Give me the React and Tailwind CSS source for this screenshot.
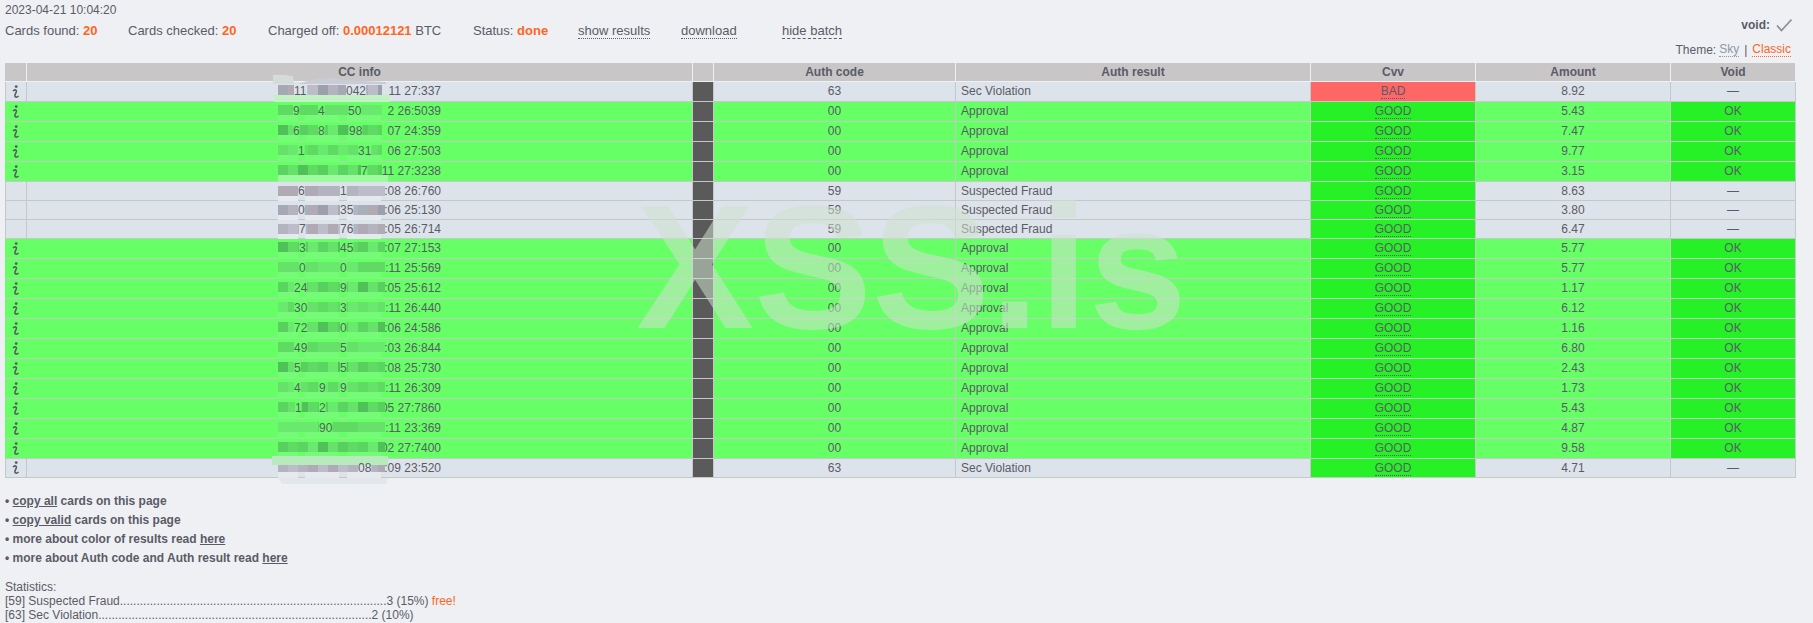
import React from "react";

const A = { code: "00", result: "Approval", cvv: "GOOD", ok: true };
const rows = [
  { tail: "11 27:337", code: "63", result: "Sec Violation", cvv: "BAD", amount: "8.92", ok: false, frags: [["11", 294], ["042", 346]] },
  { ...A, tail: "2 26:5039", amount: "5.43", frags: [["9", 293], ["4", 318], ["50", 348]] },
  { ...A, tail: "07 24:359", amount: "7.47", frags: [["6", 293], ["8", 318], ["98", 349]] },
  { ...A, tail: "06 27:503", amount: "9.77", frags: [["1", 298], ["31", 358]] },
  { ...A, tail: "11 27:3238", amount: "3.15", frags: [["7", 361]] },
  { tail: "4:08 26:760", code: "59", result: "Suspected Fraud", cvv: "GOOD", amount: "8.63", ok: false, frags: [["6", 298], ["1", 340]] },
  { tail: "4:06 25:130", code: "59", result: "Suspected Fraud", cvv: "GOOD", amount: "3.80", ok: false, frags: [["0", 298], ["35", 340]] },
  { tail: "6:05 26:714", code: "59", result: "Suspected Fraud", cvv: "GOOD", amount: "6.47", ok: false, frags: [["7", 299], ["76", 340]] },
  { ...A, tail: "4:07 27:153", amount: "5.77", frags: [["3", 299], ["45", 340]] },
  { ...A, tail: "5:11 25:569", amount: "5.77", frags: [["0", 299], ["0", 340]] },
  { ...A, tail: "2:05 25:612", amount: "1.17", frags: [["24", 294], ["9", 340]] },
  { ...A, tail: "6:11 26:440", amount: "6.12", frags: [["30", 294], ["3", 340]] },
  { ...A, tail: "3:06 24:586", amount: "1.16", frags: [["72", 294], ["0", 340]] },
  { ...A, tail: "4:03 26:844", amount: "6.80", frags: [["49", 294], ["5", 340]] },
  { ...A, tail: "0:08 25:730", amount: "2.43", frags: [["5", 294], ["5", 340]] },
  { ...A, tail: "6:11 26:309", amount: "1.73", frags: [["4", 294], ["9", 319], ["9", 340]] },
  { ...A, tail: "05 27:7860", amount: "5.43", frags: [["1", 295], ["2", 319]] },
  { ...A, tail: ":11 23:369", amount: "4.87", frags: [["90", 319]] },
  { ...A, tail: "02 27:7400", amount: "9.58", frags: [] },
  { tail: ":09 23:520", code: "63", result: "Sec Violation", cvv: "GOOD", amount: "4.71", ok: false, frags: [["08", 358]] },
];

let top = 82;
const tops = rows.map((r, i) => {
  const t = top;
  const short = !r.ok && i !== 0 && i !== 19;
  r.short = short;
  top += short || i === 19 ? 19 : 20;
  return t;
});

const greens = ["#58cf5e", "#5fdb64", "#4fc158", "#66e26b", "#5bd561", "#6ae96f"];
const greys = ["#a6a8b6", "#b3b4c0", "#9ca0ad", "#bcbdc8", "#aab0ba", "#b0aab4"];
const cols = Array.from({ length: 11 }, (_, i) => 278 + i * 10);
const OX = 268;
const OY = 70;

function Mask() {
  const shapes = [];
  rows.forEach((r, i) => {
    const t = tops[i] - OY;
    const grey = !r.ok;
    const dy = r.short ? 4 : 3;
    // smudged strips between the mosaic bands
    [[278, 20], [305, 34], [347, 34]].forEach(([x, w], k) => {
      shapes.push(
        <rect key={`s${i}-${k}`} x={x - OX} y={t + 13} width={w} height={r.short ? 6 : 7} fill={grey ? "#e6eaef" : "#76fb79"} />
      );
    });
    // mosaic band
    cols.forEach((x, c) => {
      const idx = (i * 7 + c * 5 + ((i * c) % 4)) % 6;
      const w = c === 10 ? (i < 5 ? 4 : 7) : 10;
      shapes.push(
        <rect key={`m${i}-${c}`} x={x - OX} y={t + dy} width={w} height={10} fill={(grey ? greys : greens)[idx]} />
      );
    });
    // narrow gaps where a few digits show through
    r.frags.forEach(([s, x], k) => {
      shapes.push(
        <rect key={`g${i}-${k}`} x={x - OX} y={t + dy} width={s.length * 6.7} height={10} fill={grey ? "#dde3ea" : "#66ff66"} />
      );
    });
  });
  return (
    <svg
      className="absolute left-[268px] top-[70px] pointer-events-none"
      width="128"
      height="418"
      viewBox="0 0 128 418"
    >
      {shapes}
      <path d="M5 5 Q12 4 25 6 L26 14 L5 14Z" fill="#d4dbd9" />
      <path d="M30 14 Q60 4 75 10 L118 12 L118 14Z" fill="#c9ccd4" />
      <rect x="6" y="25" width="116" height="7" fill="#c2f2c4" />
      <rect x="10" y="105" width="110" height="7" fill="#9dfa9f" />
      <rect x="4" y="386" width="116" height="9" fill="#b9eabd" />
      <path d="M10 408 H120 L118 414 H14Z" fill="#e2e7ec" />
      {rows.map((r, i) =>
        r.frags.map(([s, x], k) => (
          <text
            key={`f${i}-${k}`}
            x={x - OX}
            y={tops[i] - OY + 13}
            fontFamily="'Liberation Sans', Arial, sans-serif"
            fontSize="12"
            fill="#5b5b66"
          >
            {s}
          </text>
        ))
      )}
    </svg>
  );
}

function InfoIcon() {
  return (
    <svg width="8" height="14" viewBox="0 0 8 14" className="mx-auto block" fill="none">
      <circle cx="4.2" cy="1.6" r="1.4" fill="#5b5b66" />
      <path d="M1 6 C3 4.4 5 4.4 4.2 7 L3 10 C2.4 12.4 4.6 12.8 6.6 11" stroke="#5b5b66" strokeWidth="1.6" />
    </svg>
  );
}

function Row({ r, last }) {
  const line = "border-b border-r border-[#c4c9c6]";
  const base = r.ok ? "bg-[#66ff66]" : "bg-[#dde3ea]";
  const nudge = r.short ? "p-0" : "p-0 pb-[1px]";
  return (
    <tr className={r.short || last ? "h-[19px]" : "h-[20px]"}>
      <td className={`${base} border-b border-[#c4c9c6] ${r.ok ? "border-r border-r-transparent" : "border-r border-l"} p-0`}>
        {r.short ? null : <InfoIcon />}
      </td>
      <td className={`${base} ${line} ${nudge} pr-[251px] text-right`}>{r.tail}</td>
      <td className={`bg-[#5a5a5a] ${line} p-0`} />
      <td className={`${base} ${line} ${nudge} text-center`}>{r.code}</td>
      <td className={`${base} ${line} ${nudge} pl-[5px]`}>{r.result}</td>
      <td className={`${r.cvv === "BAD" ? "bg-[#ff6666]" : "bg-[#26f026]"} ${line} ${nudge} text-center`}>
        <span className="border-b border-dotted border-[#5b5b66]">{r.cvv}</span>
      </td>
      <td className={`${base} ${line} ${nudge} text-center`}>{r.amount}</td>
      <td className={`${r.ok ? "bg-[#26f026]" : base} ${line} ${nudge} text-center`}>{r.ok ? "OK" : "—"}</td>
    </tr>
  );
}

const th = "bg-[#c8c6c6] border-b border-r border-[#eef0f4] p-0 text-center font-bold";

export default function App() {
  return (
    <div className="relative h-[623px] w-[1813px] overflow-hidden bg-[#eef0f4] font-['Liberation_Sans',Arial,sans-serif] text-[12px] leading-[14px] text-[#5b5b66]">
      <div className="flex h-[63px] justify-between pl-[5px] pr-[21px]">
        <div className="pt-[3px]">
          <div className="h-[14px]">2023-04-21 10:04:20</div>
          <div className="mt-[5px] flex h-[18px] items-center text-[13px]">
            <div className="w-[123px]">Cards found: <b className="text-[#ff6622]">20</b></div>
            <div className="w-[140px]">Cards checked: <b className="text-[#ff6622]">20</b></div>
            <div className="w-[205px]">Charged off: <b className="text-[#ff6622]">0.00012121</b> BTC</div>
            <div className="w-[105px]">Status: <b className="text-[#ff6622]">done</b></div>
            <div className="w-[103px]"><span className="border-b border-dotted border-[#5b5b66]">show results</span></div>
            <div className="w-[101px]"><span className="border-b border-dotted border-[#5b5b66]">download</span></div>
            <div><span className="border-b border-dashed border-[#5b5b66]">hide batch</span></div>
          </div>
        </div>
        <div className="flex flex-col items-end pt-[18px]">
          <div className="flex h-[14px] items-center gap-[6px]">
            <b>void:</b>
            <svg width="16" height="14" viewBox="0 0 16 14" fill="none">
              <path d="M1 7.5 L5.5 12.5 L15.5 1.5" stroke="#8f8f98" strokeWidth="1.8" />
            </svg>
          </div>
          <div className="mt-[11px] mr-[1px] flex h-[14px] items-center">
            <span>Theme:</span>
            <span className="ml-[3px] border-b border-dotted border-[#8c9aa8] leading-[13px] text-[#8c9aa8]">Sky</span>
            <span className="mx-[5px]">|</span>
            <span className="border-b border-dotted border-[#ff6622] leading-[13px] text-[#ff6622]">Classic</span>
          </div>
        </div>
      </div>

      <table className="ml-[5px] w-[1791px] table-fixed border-separate border-spacing-0">
        <colgroup>
          <col className="w-[22px]" />
          <col className="w-[666px]" />
          <col className="w-[21px]" />
          <col className="w-[242px]" />
          <col className="w-[355px]" />
          <col className="w-[165px]" />
          <col className="w-[195px]" />
          <col className="w-[125px]" />
        </colgroup>
        <thead>
          <tr className="h-[19px]">
            <th className={th} />
            <th className={th}>CC info</th>
            <th className={th} />
            <th className={th}>Auth code</th>
            <th className={th}>Auth result</th>
            <th className={th}>Cvv</th>
            <th className={th}>Amount</th>
            <th className={th}>Void</th>
          </tr>
        </thead>
        <tbody>
          {rows.map((r, i) => (
            <Row key={i} r={r} last={i === 19} />
          ))}
        </tbody>
      </table>

      <ul className="mt-[14px] pl-[5px] font-bold leading-[19px]">
        <li>• <span className="underline">copy all</span> cards on this page</li>
        <li>• <span className="underline">copy valid</span> cards on this page</li>
        <li>• more about color of results read <span className="underline">here</span></li>
        <li>• more about Auth code and Auth result read <span className="underline">here</span></li>
      </ul>

      <div className="mt-[12px] pl-[5px]">
        <div>Statistics:</div>
        <div>[59] Suspected Fraud{".".repeat(80)}3 (15%) <span className="text-[#ff6622]">free!</span></div>
        <div>[63] Sec Violation{".".repeat(82)}2 (10%)</div>
      </div>

      <Mask />

      <div className="absolute left-[636px] top-[167px] pointer-events-none font-['Liberation_Sans',Arial,sans-serif] text-[177px] font-bold leading-[200px] text-[rgba(205,225,205,0.55)]">
        XSS.is
      </div>
    </div>
  );
}
